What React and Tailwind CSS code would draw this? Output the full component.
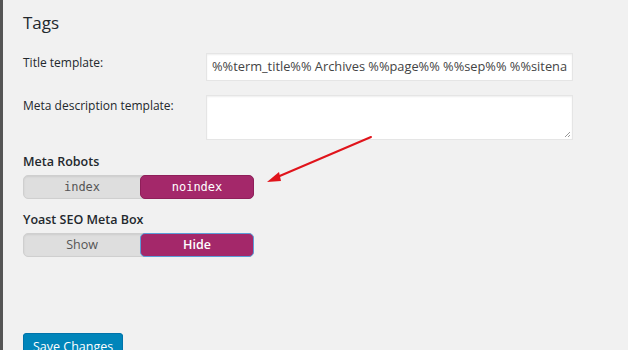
import React from "react";

const font = { fontFamily: '"Open Sans", "Noto Sans", sans-serif' };

const Toggle = ({ left, right, mono, focus }) => (
  <div className="flex w-[231px] h-[24px] rounded-[5px] bg-[#dedede] border border-[#cfcfcf] shadow-[inset_0_1px_2px_rgba(0,0,0,0.08)]">
    <div
      className={`flex-1 flex items-center justify-center text-[#555] ${
        mono ? "font-['DejaVu_Sans_Mono',monospace] text-[12px]" : "text-[12.5px]"
      }`}
    >
      {left}
    </div>
    <div
      className={`w-[114px] -my-px -mr-px flex items-center justify-center rounded-[5px] bg-[#a4286a] text-white ${
        mono ? "font-['DejaVu_Sans_Mono',monospace] text-[12px] font-medium" : "text-[12.5px] font-semibold"
      } ${focus ? "border border-[#5b9dd9]" : "border border-[#8f1f5a]"}`}
    >
      {right}
    </div>
  </div>
);

export default function App() {
  return (
    <div
      className="relative w-[628px] h-[350px] overflow-hidden bg-[#f1f1f1] text-[#23282d] border-l-[3px] border-[#555]"
      style={font}
    >
      <div className="pl-[20px] pt-[11px]">
        <h2 className="text-[17px] leading-[24px] text-[#23282d]">Tags</h2>

        <div className="mt-[18px] flex">
          <label className="w-[183px] text-[12px] leading-[18px] pt-[1px] text-[#23282d]">Title template:</label>
          <div className="w-[367px] h-[28px] bg-white border border-[#e5e5e5] shadow-[inset_0_1px_2px_rgba(0,0,0,0.07)] flex items-center px-[5px] text-[12.8px] text-[#444] whitespace-nowrap overflow-hidden">
            %%term_title%% Archives %%page%% %%sep%% %%sitena
          </div>
        </div>

        <div className="mt-[14px] flex">
          <label className="w-[183px] text-[12px] leading-[18px] pt-[2px] text-[#23282d]">
            Meta description template:
          </label>
          <div className="relative w-[367px] h-[45px] bg-white border border-[#e5e5e5] shadow-[inset_0_1px_2px_rgba(0,0,0,0.07)]">
            <svg className="absolute right-[1px] bottom-[1px]" width="8" height="8" viewBox="0 0 8 8">
              <path d="M7 2 L2 7 M7 5 L5 7" stroke="#999" strokeWidth="1" />
            </svg>
          </div>
        </div>

        <div className="mt-[13px] text-[12.5px] leading-[18px] font-semibold text-[#23282d]">Meta Robots</div>
        <div className="mt-[4px]">
          <Toggle left="index" right="noindex" mono />
        </div>

        <div className="mt-[12px] text-[12.5px] leading-[18px] font-semibold text-[#23282d]">Yoast SEO Meta Box</div>
        <div className="mt-[4px]">
          <Toggle left="Show" right="Hide" focus />
        </div>

        <button className="mt-[76px] h-[28px] px-[9px] rounded-[3px] bg-[#0085ba] border border-[#0073aa] text-white text-[12.5px] leading-[26px] shadow-[0_1px_0_#006799]">
          Save Changes
        </button>
      </div>

      <svg className="absolute left-0 top-0" width="628" height="350" viewBox="0 0 628 350">
        <line x1="368" y1="137" x2="272" y2="178" stroke="#e0141b" strokeWidth="2" strokeLinecap="round" />
        <path d="M264 182 L276 172 L278 181 Z" fill="#e0141b" />
      </svg>
    </div>
  );
}
